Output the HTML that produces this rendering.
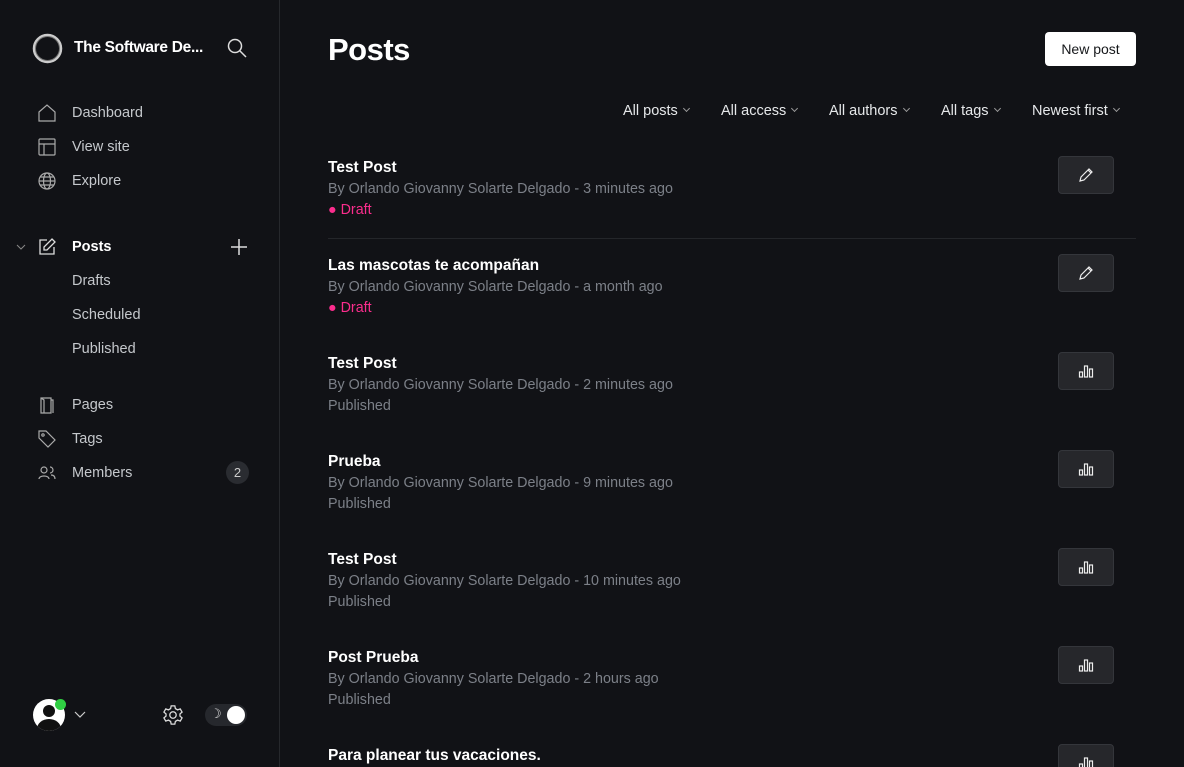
<!DOCTYPE html>
<html><head><meta charset="utf-8"><style>
*{box-sizing:border-box;margin:0;padding:0}
html{width:1184px;height:767px;overflow:hidden;background:#111216}
body{width:1184px;height:767px;overflow:hidden;background:#111216;font-family:"Liberation Sans",sans-serif;color:#fff;position:relative}
.side{position:absolute;left:0;top:0;width:280px;height:767px;border-right:1px solid #26282c}
.nav{position:absolute;left:38px;height:18px;width:220px;font-size:14.5px;color:#c5c8cc}
.nav svg{position:absolute;left:0;top:0}
.nav span{position:absolute;left:34px;top:0;line-height:18px;white-space:nowrap}
h1{position:absolute;left:328px;top:32px;font-size:31px;font-weight:bold;letter-spacing:-0.5px}
.btn{position:absolute;left:1045px;top:32px;width:91px;height:34px;background:#fff;color:#15171a;border-radius:4px;font-size:14px;text-align:center;line-height:34px}
.filt{position:absolute;top:103px;font-size:14.5px;color:#e6e8ea}
.filt:after{content:"";display:inline-block;width:4px;height:4px;border-right:1px solid #999;border-bottom:1px solid #999;transform:rotate(45deg);margin-left:6px;vertical-align:4px}
.post{position:absolute;left:328px;width:808px}
.t{font-size:15.5px;font-weight:bold;color:#fff;position:absolute;top:0;white-space:nowrap}
.m{font-size:14.3px;color:#7c8088;position:absolute;top:22px;white-space:nowrap}
.s{font-size:14.3px;position:absolute;top:43px;color:#7c8088}
.d{color:#fb2d8d}
.ib{position:absolute;left:730px;top:-3px;width:56px;height:38px;background:#26272b;border:1px solid #34363b;border-radius:4px;display:flex;align-items:center;justify-content:center}
</style></head><body>
<div class="side">
<svg style="position:absolute;left:32px;top:33px" width="31" height="31" viewBox="0 0 31 31"><circle cx="15.5" cy="15.5" r="13.5" fill="none" stroke="#ccc" stroke-width="2.5"/><circle cx="15.5" cy="15.5" r="12" fill="none" stroke="#777" stroke-width="1"/></svg>
<div style="position:absolute;left:74px;top:39px;font-size:15.5px;font-weight:bold;letter-spacing:-0.3px">The Software De...</div>
<svg style="position:absolute;left:227px;top:38px" width="20" height="20" viewBox="0 0 20 20" fill="none" stroke="#ddd" stroke-width="1.5"><circle cx="8" cy="8" r="6.5"/><path d="M13 13l6 6"/></svg>
<div class="nav" style="top:104px"><svg width="18" height="18" viewBox="0 0 18 18" fill="none" stroke="#aaa" stroke-width="1.2"><path d="M1 8L9 1l8 7v9H1z"/></svg><span>Dashboard</span></div>
<div class="nav" style="top:138px"><svg width="18" height="18" viewBox="0 0 18 18" fill="none" stroke="#aaa" stroke-width="1.2"><rect x="1" y="1" width="16" height="16" rx="1"/><path d="M1 6h16M6 6v11"/></svg><span>View site</span></div>
<div class="nav" style="top:172px"><svg width="18" height="18" viewBox="0 0 18 18" fill="none" stroke="#aaa" stroke-width="1.2"><circle cx="9" cy="9" r="8"/><ellipse cx="9" cy="9" rx="3.5" ry="8"/><path d="M1 9h16M2.5 5h13M2.5 13h13"/></svg><span>Explore</span></div>
<svg style="position:absolute;left:16px;top:243px" width="10" height="8" viewBox="0 0 10 8" fill="none" stroke="#888"><path d="M1 2l4 4 4-4"/></svg>
<div class="nav" style="top:238px;color:#fff;font-weight:bold"><svg width="18" height="18" viewBox="0 0 18 18" fill="none" stroke="#ddd" stroke-width="1.3"><path d="M9 2H2v14h14V9"/><path d="M14 1l3 3-8 8H6V9z"/></svg><span>Posts</span></div>
<svg style="position:absolute;left:230px;top:238px" width="18" height="18" viewBox="0 0 18 18" stroke="#ddd" stroke-width="1.5"><path d="M9 1v16M1 9h16"/></svg>
<div class="nav" style="top:272px"><span>Drafts</span></div>
<div class="nav" style="top:306px"><span>Scheduled</span></div>
<div class="nav" style="top:340px"><span>Published</span></div>
<div class="nav" style="top:396px"><svg width="18" height="18" viewBox="0 0 18 18" fill="none" stroke="#aaa" stroke-width="1.2"><path d="M3 2h10v15H3zM13 4h2v13"/><path d="M3 2l3 2v13"/></svg><span>Pages</span></div>
<div class="nav" style="top:430px"><svg width="18" height="18" viewBox="0 0 18 18" fill="none" stroke="#aaa" stroke-width="1.2"><path d="M1 1h7l9 9-7 7-9-9z"/><circle cx="5" cy="5" r="1.2"/></svg><span>Tags</span></div>
<div class="nav" style="top:464px"><svg width="18" height="18" viewBox="0 0 18 18" fill="none" stroke="#aaa" stroke-width="1.2"><circle cx="6" cy="6" r="3"/><path d="M1 15c0-4 10-4 10 0M12 3a3 3 0 010 6M13 11c2 0 4 1 4 4"/></svg><span>Members</span></div>
<div style="position:absolute;left:226px;top:461px;width:23px;height:23px;border-radius:50%;background:#2a2c31;color:#ccc;font-size:13px;text-align:center;line-height:23px">2</div>
<div style="position:absolute;left:33px;top:699px;width:32px;height:32px;border-radius:50%;background:#fff;overflow:hidden"><div style="position:absolute;left:10px;top:6px;width:12px;height:12px;border-radius:50%;background:#111"></div><div style="position:absolute;left:4px;top:20px;width:24px;height:20px;border-radius:50%;background:#111"></div></div>
<div style="position:absolute;left:55px;top:699px;width:11px;height:11px;border-radius:50%;background:#30cf43"></div>
<svg style="position:absolute;left:74px;top:711px" width="12" height="8" viewBox="0 0 12 8" fill="none" stroke="#ccc" stroke-width="1.2"><path d="M1 1l5 5 5-5"/></svg>
<svg style="position:absolute;left:162px;top:704px" width="22" height="22" viewBox="0 0 24 24" fill="none" stroke="#ddd" stroke-width="1.4"><circle cx="12" cy="12" r="3.5"/><path d="M10 2h4l.6 3 2.4 1.4 2.9-1 2 3.4-2.3 2v2.4l2.3 2-2 3.4-2.9-1L14.6 19 14 22h-4l-.6-3L7 17.6l-2.9 1-2-3.4 2.3-2v-2.4l-2.3-2 2-3.4 2.9 1L9.4 5z"/></svg>
<div style="position:absolute;left:205px;top:704px;width:42px;height:22px;border-radius:11px;background:#26282d"></div>
<div style="position:absolute;left:210px;top:706px;font-size:13px;color:#ddd">☽</div>
<div style="position:absolute;left:227px;top:706px;width:18px;height:18px;border-radius:50%;background:#fff"></div>
</div>
<h1>Posts</h1>
<div class="btn">New post</div>
<div class="filt" style="left:623px">All posts</div>
<div class="filt" style="left:721px">All access</div>
<div class="filt" style="left:829px">All authors</div>
<div class="filt" style="left:941px">All tags</div>
<div class="filt" style="left:1032px">Newest first</div>
<div style="position:absolute;left:328px;top:238px;width:808px;height:1px;background:#24262a"></div>
<div id="posts"></div>
<script>
var P=[["Test Post","3 minutes ago",1],["Las mascotas te acompañan","a month ago",1],["Test Post","2 minutes ago",0],["Prueba","9 minutes ago",0],["Test Post","10 minutes ago",0],["Post Prueba","2 hours ago",0],["Para planear tus vacaciones.","1 day ago",0]];
var pen='<svg width="16" height="16" viewBox="0 0 16 16" fill="none" stroke="#eee" stroke-width="1.2"><path d="M2 14l1-4 8-8 3 3-8 8zM10 3l3 3"/></svg>';
var bar='<svg width="16" height="14" viewBox="0 0 16 14" fill="none" stroke="#eee" stroke-width="1.2"><rect x="1.5" y="8" width="3" height="5"/><rect x="6.5" y="2" width="3" height="11"/><rect x="11.5" y="5" width="3" height="8"/></svg>';
var h='';P.forEach(function(p,i){var y=159+i*98;h+='<div class="post" style="top:'+y+'px"><div class="t">'+p[0]+'</div><div class="m">By Orlando Giovanny Solarte Delgado - '+p[1]+'</div>'+(p[2]?'<div class="s d">● Draft</div>':'<div class="s">Published</div>')+'<div class="ib">'+(p[2]?pen:bar)+'</div></div>';});
document.getElementById('posts').innerHTML=h;
</script>
</body></html>
